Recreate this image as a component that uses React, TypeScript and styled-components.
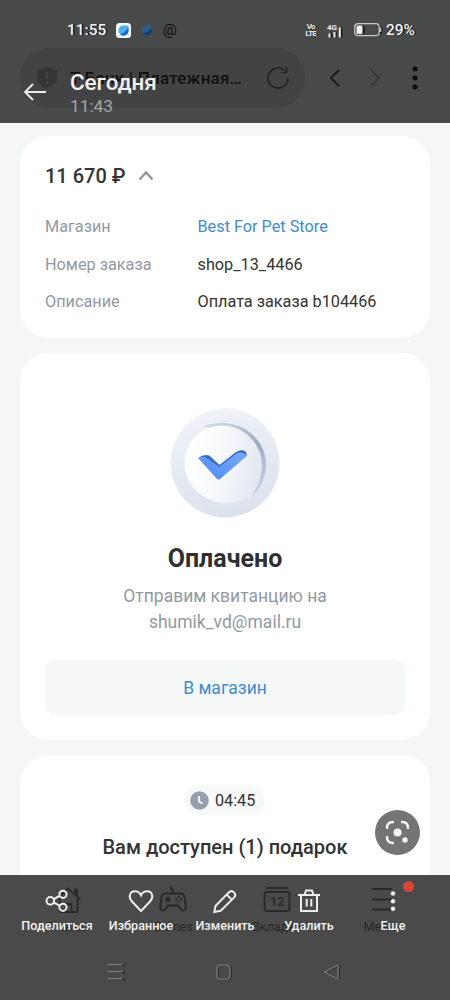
import React from 'react';
import styled, { createGlobalStyle } from 'styled-components';

const Global = createGlobalStyle`
  * { box-sizing: border-box; }
  body { margin: 0; background: #f5f6f8; }
`;

const Screen = styled.div`
  width: 450px;
  height: 1000px;
  overflow: hidden;
  display: flex;
  flex-direction: column;
  background: #f5f6f8;
  font-family: Roboto, "Liberation Sans", sans-serif;
  color: #333;
`;

const Icon = styled.svg`
  display: block;
  flex: none;
  overflow: visible;
`;

const Text = styled.span<{ $size: number; $weight?: number; $color?: string; $track?: number }>`
  display: block;
  white-space: nowrap;
  font-size: ${p => p.$size}px;
  font-weight: ${p => p.$weight ?? 400};
  color: ${p => p.$color ?? '#333'};
  letter-spacing: ${p => p.$track ?? 0}px;
`;

/* header */

const Header = styled.header`
  position: relative;
  flex: none;
  height: 123px;
  background: #484a49;
`;

const StatusBar = styled.div`
  display: flex;
  align-items: center;
  height: 48px;
  padding: 12px 35px 0 67px;
`;

const StatusText = styled.span<{ $width: number }>`
  width: ${p => p.$width}px;
  font-size: 15.5px;
  line-height: 18px;
  font-weight: 500;
  color: #f4f4f4;
  text-shadow: 1.5px 0 0 #161616;
  white-space: nowrap;
`;

const StatusGroup = styled.div<{ $gap: number }>`
  display: flex;
  align-items: center;
  gap: ${p => p.$gap}px;
`;

const StatusRight = styled(StatusGroup)`
  margin-left: auto;
`;

const Tiny = styled.div`
  display: flex;
  flex-direction: column;
  font-size: 8px;
  line-height: 7px;
  font-weight: 700;
  color: #eee;
  text-shadow: 1px 0 0 #161616;
  text-align: center;
  letter-spacing: -0.8px;
`;

const AtSign = styled.span`
  font-size: 15.5px;
  line-height: 18px;
  color: #0c0c0c;
`;

const AddressRow = styled.div`
  display: flex;
  align-items: center;
  height: 60px;
  padding-left: 20px;
`;

const AddressPill = styled.div`
  display: flex;
  align-items: center;
  width: 285px;
  height: 60px;
  padding: 0 16px 0 16px;
  border-radius: 30px;
  background: #434343;
`;

const AddressTitle = styled(Text)`
  margin-left: 12px;
  flex: 1;
`;

const NavIcons = styled.div`
  display: flex;
  flex: 1;
  padding-left: 10px;
`;

const NavCell = styled.div`
  display: flex;
  width: 40px;
  justify-content: center;
  align-items: center;
`;

const ViewerTitle = styled.div`
  position: absolute;
  left: 23px;
  top: 68px;
  display: flex;
  align-items: center;
  gap: 23px;
`;

const ViewerLines = styled.div`
  display: flex;
  flex-direction: column;
  gap: 1px;
  padding-top: 1px;
`;

/* content */

const Content = styled.main`
  position: relative;
  flex: none;
  display: flex;
  flex-direction: column;
  gap: 15px;
  height: 752px;
  padding: 12px 20px 0;
  overflow: hidden;
  border-top: 1px solid #fff;
`;

const Card = styled.section<{ $height: number; $center?: boolean; $top: number }>`
  flex: none;
  display: flex;
  flex-direction: column;
  align-items: ${p => (p.$center ? 'center' : 'stretch')};
  height: ${p => p.$height}px;
  padding: ${p => p.$top}px 25px 0;
  border-radius: 28px;
  background: #fff;
`;

const AmountRow = styled.div`
  display: flex;
  align-items: center;
  gap: 12px;
  height: 26px;
  margin-bottom: 19px;
`;

const DetailRow = styled.div`
  display: grid;
  grid-template-columns: 152.5px 1fr;
  align-items: center;
  height: 37.5px;
`;

const Subtitle = styled.p`
  margin: 9px 0 0;
  text-align: center;
  font-size: 17.5px;
  line-height: 26px;
  color: #9299a2;
`;

const Heading = styled.h1`
  margin: 26px 0 0;
  font-size: 25px;
  line-height: 30px;
  font-weight: 700;
  color: #2f2f2f;
`;

const StoreButton = styled.button`
  width: 360px;
  height: 55px;
  margin-top: 25px;
  border: 0;
  border-radius: 10px;
  background: #f6f8f8;
  font: 400 17.5px/24px Roboto, sans-serif;
  color: #428bd0;
`;

const Timer = styled.div`
  display: flex;
  align-items: center;
  gap: 6px;
  width: 80px;
  height: 30px;
  padding-left: 5px;
  border-radius: 15px;
  background: #f7f9f9;
`;

const GiftTitle = styled.h2`
  margin: 20px 0 0;
  font-size: 20px;
  line-height: 24px;
  font-weight: 500;
  white-space: nowrap;
`;

const LensButton = styled.div`
  position: absolute;
  left: 375px;
  top: 686px;
  width: 45px;
  height: 45px;
  border-radius: 50%;
  background: #747474;
`;

/* footer */

const Footer = styled.footer`
  position: relative;
  flex: none;
  display: flex;
  flex-direction: column;
  height: 125px;
  background: #4a4a4a;
`;

const BrowserTabs = styled.div`
  display: flex;
  height: 70px;
  padding: 10px 17px 0;
`;

const BarItem = styled.div<{ $color: string; $weight: number; $size: number }>`
  flex: 1;
  min-width: 0;
  display: flex;
  flex-direction: column;
  align-items: center;
  gap: 4px;
  font-size: ${p => p.$size}px;
  line-height: 16px;
  font-weight: ${p => p.$weight};
  color: ${p => p.$color};
  white-space: nowrap;
`;

const ViewerActions = styled.div`
  position: absolute;
  inset: 11px 15px auto;
  display: flex;
`;

const Badge = styled.div`
  position: absolute;
  left: 402.5px;
  top: 6px;
  width: 11px;
  height: 11px;
  border-radius: 50%;
  background: #db4437;
`;

const SystemNav = styled.div`
  display: flex;
  height: 55px;
  padding: 0 64px 1px 62px;
`;

const SystemKey = styled.div`
  flex: 1;
  display: flex;
  align-items: center;
  justify-content: center;
`;

const GHOST = '#292929';
const LIGHT = '#ededed';

const details = [
  { label: 'Магазин', value: 'Best For Pet Store', link: true },
  { label: 'Номер заказа', value: 'shop_13_4466' },
  { label: 'Описание', value: 'Оплата заказа b104466' },
];

const ghostTabs = [
  {
    label: 'Главная',
    icon: <path d="M3 14 14 3.500 26 14M6 12v15h17.500V12M12.500 27v-8h5v8M21 8V4.500h2v6" />,
  },
  {
    label: 'Games',
    icon: (
      <g>
        <path d="M15 8V4.500h-2V1M7 8.500h16q3 0 3.500 4l1.300 9q0 4-3 4-1.700 0-2.800-2l-2-3h-10l-2 3q-1.100 2-2.800 2-3 0-3-4l1.300-9Q4 8.500 7 8.500Z" />
        <path d="M7 14.500h6M10 11.500v6" />
        <path d="M20.500 11v2M20.500 16v2M17 14.500h2M22 14.500h2" />
      </g>
    ),
  },
  {
    label: 'Вкладки',
    icon: (
      <g>
        <path d="M4 3h22" />
        <rect x="2.500" y="7" width="25" height="19" rx="2" />
        <text x="15.300" y="21" fontSize="12.500" fontWeight="500" textAnchor="middle" fill={GHOST} stroke="none">12</text>
      </g>
    ),
  },
  { label: 'Меню', icon: <path d="M6 4h20M6 14.500h20M6 24.500h20" /> },
];

const actions = [
  {
    label: 'Поделиться',
    icon: (
      <g>
        <circle cx="7.300" cy="14.800" r="3.800" />
        <circle cx="20" cy="8.300" r="3.600" />
        <circle cx="20" cy="21.300" r="3.600" />
        <path d="m10.800 13 6-3M10.800 16.600l6 3" />
      </g>
    ),
  },
  {
    label: 'Избранное',
    icon: <path d="M14 25 5 15.500C1 11.300 2.500 5.300 8 5.300c3 0 5 1.700 6 4 1-2.300 3-4 6-4 5.500 0 7 6 3 10.200Z" />,
  },
  {
    label: 'Изменить',
    icon: <path d="m4.500 20 13.300-13.600q2.600-2.600 5.200 0t0 5.200L9.700 24.800l-6.400 1.100ZM15.800 8.600l5 5" />,
  },
  {
    label: 'Удалить',
    icon: <path d="M3 9h22M9.500 9 11 4.500h6L18.500 9M6 9v16h16V9M11.700 13v7.500M16.300 13v7.500" />,
  },
  {
    label: 'Еще',
    icon: (
      <g fill={LIGHT} stroke="none">
        <circle cx="14" cy="7.500" r="2.200" />
        <circle cx="14" cy="15.200" r="2.200" />
        <circle cx="14" cy="22.800" r="2.200" />
      </g>
    ),
  },
];

const PaidEmblem = () => (
  <Icon width="110" height="110" viewBox="0 0 110 110">
    <defs>
      <linearGradient id="ring" x1="0.300" y1="0" x2="0.600" y2="1">
        <stop offset="0" stopColor="#f0f3f8" />
        <stop offset="1" stopColor="#dbe2ed" />
      </linearGradient>
      <linearGradient id="edge" x1="0" y1="0" x2="0.600" y2="1">
        <stop offset="0" stopColor="#d5dde8" />
        <stop offset="0.600" stopColor="#9aacc3" />
        <stop offset="1" stopColor="#c0ccda" />
      </linearGradient>
      <linearGradient id="face" x1="0" y1="0.400" x2="1" y2="0.600">
        <stop offset="0" stopColor="#ffffff" />
        <stop offset="0.400" stopColor="#f9fafc" />
        <stop offset="1" stopColor="#e1e7f0" />
      </linearGradient>
      <linearGradient id="tick" x1="1" y1="0" x2="0" y2="1">
        <stop offset="0" stopColor="#78a9fa" />
        <stop offset="1" stopColor="#4d8bef" />
      </linearGradient>
    </defs>
    <circle cx="55" cy="55" r="54.500" fill="url(#ring)" />
    <path d="M33 18.500C42 15 50 14.500 58 15.500 80 18 96 36 96 56c0 13-5 24-14 31.500C90 62 68 22 33 18.500Z" fill="url(#edge)" />
    <path d="M14.500 55C14.500 34 31 17.500 52 17.500S92 35 92 57c0 11-4 22-10.500 30.500C74 93 66 95 58 95 33 95 14.500 77 14.500 55Z" fill="url(#face)" />
    <path d="M28.300 50q5-4.500 11-2.500L49.500 57 66 44q5.500-3 9.500-.5l1.500 4-28 22Z" fill="#386ac3" />
    <path d="M28.300 50.200q4.700-2.700 8.200-.2L49.500 59 66 45.800q5.500-3.500 11 1.900L50 71q-1.700 1.300-3.200-.2Z" fill="url(#tick)" />
  </Icon>
);

export default function App() {
  return (
    <Screen>
      <Global />
      <Header>
        <StatusBar>
          <StatusText $width={49}>11:55</StatusText>
          <StatusGroup $gap={10}>
            <Icon width="15" height="15" viewBox="0 0 15 15">
              <rect width="15" height="15" rx="3.500" fill="#f4f8fc" />
              <path d="M7.500 2.500h5V7.500A5 5 0 1 1 7.500 2.500Z" fill="#4aaef1" />
              <path d="M12.500 4.500v3A5 5 0 0 1 4 11.200C7.500 11 10 8 12.500 4.500Z" fill="#1968d5" />
            </Icon>
            <Icon width="12" height="12" viewBox="0 0 12 12">
              <path d="M6 1h5v5a5 5 0 1 1-5-5Z" fill="#2b5e84" />
              <path d="M11 3v3a5 5 0 0 1-9 3.200C6 9 9 6 11 3Z" fill="#123d79" />
            </Icon>
            <AtSign>@</AtSign>
          </StatusGroup>
          <StatusRight $gap={11}>
            <Tiny><span>Vo</span><span>LTE</span></Tiny>
            <Icon width="16" height="15" viewBox="0 0 16 15">
              <path d="M4 10.500v4M8.500 9v5.500M14 4.500v10" stroke="#171717" strokeWidth="2.500" />
              <path d="M2.500 10.500v4M7.500 9v5.500M12.800 4.500v10" stroke="#eee" strokeWidth="2" />
              <text x="0" y="7" fontSize="8" fontWeight="700" fill="#eee">4G</text>
            </Icon>
            <StatusGroup $gap={4}>
              <Icon width="28" height="14" viewBox="0 0 28 14">
                <path d="M26 3q3 4 0 8M9.500 3v8" stroke="#171717" strokeWidth="2" fill="none" />
                <rect x="0.700" y="0.700" width="24.500" height="12" rx="3.500" fill="none" stroke="#c9c9c9" strokeWidth="1.200" />
                <path d="M26.500 4.500v4.500" stroke="#c9c9c9" strokeWidth="1.500" />
                <rect x="2.500" y="2.500" width="6" height="8.500" rx="1.500" fill="#f1f1f1" />
              </Icon>
              <StatusText $width={29}>29%</StatusText>
            </StatusGroup>
          </StatusRight>
        </StatusBar>
        <AddressRow>
          <AddressPill>
            <Icon width="22" height="24" viewBox="0 0 22 24">
              <path d="M11 1 21 4.500V12q0 7-10 11Q1 19 1 12V4.500Z" fill="#353535" />
              <path d="M11 6v7M11 15.500V18" stroke="#444" strokeWidth="2" />
            </Icon>
            <AddressTitle $size={17} $weight={500} $color="#111" $track={0.22}>Т-Банк | Платежная…</AddressTitle>
            <Icon width="22" height="22" viewBox="0 0 22 22" fill="none" stroke="#242424" strokeWidth="1.700">
              <path d="M21 11a10 10 0 1 1-4-8M19.500 0v5.500h-5.500" />
            </Icon>
          </AddressPill>
          <NavIcons>
            <NavCell>
              <Icon width="10" height="18" viewBox="0 0 10 18"><path d="M9 1 1 9l8 8" fill="none" stroke="#111" strokeWidth="1.700" /></Icon>
            </NavCell>
            <NavCell>
              <Icon width="10" height="18" viewBox="0 0 10 18"><path d="m1 1 8 8-8 8" fill="none" stroke="#303131" strokeWidth="1.500" /></Icon>
            </NavCell>
            <NavCell>
              <Icon width="6" height="24" viewBox="0 0 6 24" fill="#0b0b0b">
                <circle cx="3" cy="3" r="2.500" /><circle cx="3" cy="12" r="2.500" /><circle cx="3" cy="21" r="2.500" />
              </Icon>
            </NavCell>
          </NavIcons>
        </AddressRow>
        <ViewerTitle>
          <Icon width="24" height="18" viewBox="0 0 24 18" fill="none" stroke={LIGHT} strokeWidth="1.800">
            <path d="M23 9H2M10 1 2 9l8 8" />
          </Icon>
          <ViewerLines>
            <Text $size={22.4} $weight={500} $color="#f1f1f1">Сегодня</Text>
            <Text $size={17.3} $color="#a5a5a5">11:43</Text>
          </ViewerLines>
        </ViewerTitle>
      </Header>

      <Content>
        <Card $height={202} $top={27}>
          <AmountRow>
            <Text $size={20} $weight={500}>11 670 ₽</Text>
            <Icon width="16" height="10" viewBox="0 0 16 10"><path d="m1.500 8.500 6.500-7 6.500 7" fill="none" stroke="#929292" strokeWidth="2.300" /></Icon>
          </AmountRow>
          {details.map(d => (
            <DetailRow key={d.label}>
              <Text $size={16.25} $color="#9299a2">{d.label}</Text>
              <Text $size={16.25} $color={d.link ? '#428bd0' : '#333'}>{d.value}</Text>
            </DetailRow>
          ))}
        </Card>
        <Card $height={387} $top={55} $center>
          <PaidEmblem />
          <Heading>Оплачено</Heading>
          <Subtitle>Отправим квитанцию на<br />shumik_vd@mail.ru</Subtitle>
          <StoreButton>В магазин</StoreButton>
        </Card>
        <Card $height={180} $top={30} $center>
          <Timer>
            <Icon width="19" height="19" viewBox="0 0 19 19">
              <circle cx="9.500" cy="9.500" r="9.300" fill="#969fad" />
              <path d="M9 5v5.500l3.500 2" fill="none" stroke="#fff" strokeWidth="1.800" />
            </Icon>
            <Text $size={16.2}>04:45</Text>
          </Timer>
          <GiftTitle>Вам доступен (1) подарок</GiftTitle>
        </Card>
        <LensButton>
          <Icon width="45" height="45" viewBox="0 0 45 45" fill="none" stroke="#f4f4f4" strokeWidth="2.300">
            <path d="M12 19v-1q0-6 6-6h1M26 12h1q6 0 6 6v1M12 26v1q0 6 6 6h1" />
            <circle cx="22.500" cy="22.500" r="4" fill="#f4f4f4" stroke="none" />
            <circle cx="30" cy="30" r="2.700" fill="#f4f4f4" stroke="none" />
          </Icon>
        </LensButton>
      </Content>

      <Footer>
        <BrowserTabs>
          {ghostTabs.map(t => (
            <BarItem key={t.label} $color={GHOST} $weight={400} $size={12.5}>
              <Icon width="30" height="30" viewBox="0 0 30 30" fill="none" stroke={GHOST} strokeWidth="1.800">{t.icon}</Icon>
              {t.label}
            </BarItem>
          ))}
        </BrowserTabs>
        <SystemNav>
          <SystemKey>
            <Icon width="18" height="16" viewBox="0 0 18 16" fill="none">
              <path d="M15 1.500h3M15 8.500h3M15 15.500h3" stroke="#222" strokeWidth="1.500" />
              <path d="M.5 .5h15M.5 7.500h15M.5 14.500h15" stroke="#808080" />
            </Icon>
          </SystemKey>
          <SystemKey>
            <Icon width="16" height="16" viewBox="0 0 16 16" fill="none">
              <rect x="2.500" y="1.500" width="13" height="13.500" rx="3" stroke="#292929" />
              <rect x="1" y="1" width="13" height="14" rx="3" stroke="#858585" />
            </Icon>
          </SystemKey>
          <SystemKey>
            <Icon width="16" height="16" viewBox="0 0 16 16" fill="none" strokeLinejoin="round">
              <path d="M15.500 1.500v13.500L3 8.500Z" stroke="#292929" />
              <path d="M14 1v14L.5 8Z" stroke="#858585" />
            </Icon>
          </SystemKey>
        </SystemNav>
        <ViewerActions>
          {actions.map(a => (
            <BarItem key={a.label} $color="#f1f1f1" $weight={500} $size={12.6}>
              <Icon width="28" height="28" viewBox="0 0 28 28" fill="none" stroke={LIGHT} strokeWidth="2">{a.icon}</Icon>
              {a.label}
            </BarItem>
          ))}
        </ViewerActions>
        <Badge />
      </Footer>
    </Screen>
  );
}
